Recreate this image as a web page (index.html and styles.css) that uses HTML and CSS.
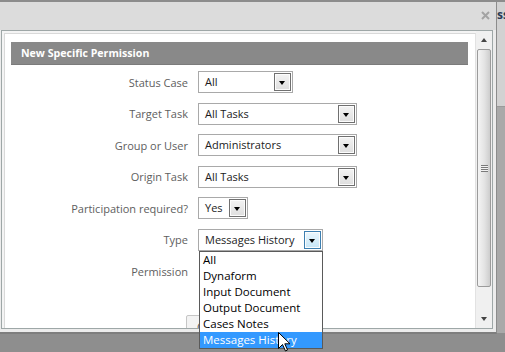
FILE: index.html
```html
<!DOCTYPE html>
<html lang="en">
<head>
  <meta charset="UTF-8" />
  <title>New Specific Permission</title>
  <link rel="stylesheet" href="styles.css">
</head>
<body>

  <div class="backdrop">
    <div class="backdrop-top"><span class="backdrop-text">ss</span></div>
  </div>

  <div class="dialog">
    <div class="dlg-head">
      <svg class="close" width="9" height="9" viewBox="0 0 9 9">
        <path d="M1 1 L8 8 M8 1 L1 8" stroke="#a3a3a3" stroke-width="2" />
      </svg>
    </div>
    <div class="dlg-body">
      <div class="frame">
        <div class="frame-main">
          <div class="inner-box">
            <div class="form-title">New Specific Permission</div>

            <div class="fields">
              <div class="row">
                <label>Status Case</label>
                <div class="select w-status">All<span class="arrow"></span></div>
              </div>
              <div class="row">
                <label>Target Task</label>
                <div class="select w-wide">All Tasks<span class="arrow"></span></div>
              </div>
              <div class="row">
                <label>Group or User</label>
                <div class="select w-wide">Administrators<span class="arrow"></span></div>
              </div>
              <div class="row">
                <label>Origin Task</label>
                <div class="select w-wide">All Tasks<span class="arrow"></span></div>
              </div>
              <div class="row">
                <label>Participation required?</label>
                <div class="select w-yes">Yes<span class="arrow"></span></div>
              </div>
              <div class="row">
                <label>Type</label>
                <div class="select w-type">Messages History<span class="arrow focus"></span></div>
              </div>
              <div class="row">
                <label>Permission</label>
              </div>
            </div>

            <div class="actions">
              <button class="btn">C</button>
            </div>
          </div>
        </div>
        <div class="scrollbar">
          <div class="sb-btn"><span class="tri-up"></span></div>
          <div class="sb-thumb"><span class="grip"></span></div>
          <div class="sb-track"></div>
          <div class="sb-btn"><span class="tri-down"></span></div>
        </div>
      </div>
    </div>
  </div>

  <ul class="dropdown">
    <li>All</li>
    <li>Dynaform</li>
    <li>Input Document</li>
    <li>Output Document</li>
    <li>Cases Notes</li>
    <li class="selected">Messages History</li>
  </ul>

  <svg class="cursor" width="13" height="20" viewBox="0 0 13 20">
    <path d="M0.5 0.5 L0.5 16.5 L4.5 12.5 L7.5 19 L9.5 18 L6.8 11.8 L12 11.8 Z" fill="#fff" stroke="#000" stroke-width="1" stroke-linejoin="round" />
  </svg>

</body>
</html>
```

FILE: styles.css
```css
* {
  box-sizing: border-box;
  margin: 0;
  padding: 0;
}

body {
  position: relative;
  width: 505px;
  height: 352px;
  overflow: hidden;
  background: #8e8e8e;
  font-family: 'Open Sans', 'Noto Sans', sans-serif;
  font-size: 11px;
}

/* page behind the modal */
.backdrop {
  height: 333px;
  background: #a9a9a9;
  border-top: 2px solid #8c8c8c;
}

.backdrop-top {
  height: 105px;
  background: #d2d2d2;
  border-bottom: 1px solid #9a9a9a;
  padding: 4px 0 0 497px;
}

.backdrop-text {
  color: #2b3a55;
  font-weight: 700;
  font-size: 12px;
}

/* dialog */
.dialog {
  position: absolute;
  left: -4px;
  top: 0;
  width: 501px;
  height: 334px;
  display: flex;
  flex-direction: column;
  background: #ececec;
  border-top: 2px solid #8c8c8c;
  border-bottom: 2px solid #7e7e7e;
  border-right: 1px solid #8c8c8c;
}

.dlg-head {
  flex-shrink: 0;
  height: 28px;
  background: #dcdcdc;
  display: flex;
  justify-content: flex-end;
  align-items: center;
  padding: 0 6px 2px 0;
}

.dlg-body {
  flex: 1;
  min-height: 0;
  display: flex;
  padding: 0 3px 3px 5px;
}

.frame {
  flex: 1;
  min-height: 0;
  display: flex;
  overflow: hidden;
  background: #f4f4f4;
  border: 1px solid #9ea7a7;
}

.frame-main {
  flex: 1;
  min-height: 0;
  display: flex;
  padding: 2px 0 0 2px;
}

.inner-box {
  flex: 1;
  overflow: hidden;
  background: #fff;
  border-top: 1px solid #d9d9d9;
  border-left: 1px solid #d9d9d9;
  border-right: 1px solid #e2e2e2;
  padding: 8px 7px 0 6px;
}

.form-title {
  height: 23px;
  line-height: 22px;
  padding-left: 10px;
  background: #898989;
  border-bottom: 1px solid #7b7b7b;
  color: #fff;
  font-weight: 700;
  font-size: 10.6px;
}

.fields {
  display: flex;
  flex-direction: column;
  gap: 9.6px;
  padding-top: 6px;
}

.row {
  display: flex;
  align-items: center;
  height: 22px;
}

.row label {
  width: 177px;
  margin-right: 10px;
  text-align: right;
  color: #5e5e5e;
}

.select {
  position: relative;
  height: 22px;
  line-height: 20px;
  padding-left: 6px;
  border: 1px solid #a9a9a9;
  background: #fff;
  color: #1c1c1c;
}

.w-status { width: 95px; }
.w-wide { width: 159px; }
.w-yes { width: 50px; }
.w-type { width: 125px; }

.arrow {
  position: absolute;
  right: 1px;
  top: 1px;
  width: 17px;
  height: 18px;
  border: 1px solid #707070;
  background: linear-gradient(#f3f3f3, #dedede);
  box-shadow: inset 0 0 0 1px #fcfcfc;
}

.arrow::after {
  content: "";
  position: absolute;
  left: 4px;
  top: 7px;
  border-left: 3.5px solid transparent;
  border-right: 3.5px solid transparent;
  border-top: 4px solid #000;
}

.arrow.focus {
  border-color: #3c7fb1;
  background: linear-gradient(#eaf6fd, #c6e6f7);
}

.actions {
  padding: 32px 0 0 175px;
}

.btn {
  height: 24px;
  width: 60px;
  padding-left: 10px;
  text-align: left;
  border: 1px solid #c6c6c6;
  border-radius: 2px;
  background: #f3f3f3;
  color: #555;
  font-family: inherit;
  font-size: 11px;
}

/* scrollbar */
.scrollbar {
  width: 16px;
  display: flex;
  flex-direction: column;
  background: #f0f0f0;
}

.sb-btn {
  flex-shrink: 0;
  height: 18px;
  display: flex;
  align-items: center;
  justify-content: center;
}

.tri-up {
  border-left: 3.5px solid transparent;
  border-right: 3.5px solid transparent;
  border-bottom: 4px solid #444;
}

.tri-down {
  border-left: 3.5px solid transparent;
  border-right: 3.5px solid transparent;
  border-top: 4px solid #444;
}

.sb-thumb {
  flex-shrink: 0;
  height: 238px;
  margin: 0 1px;
  display: flex;
  align-items: center;
  justify-content: center;
  border: 1px solid #9b9b9b;
  border-radius: 2px;
  background: linear-gradient(to right, #f4f4f4, #e3e3e3 55%, #cdcdcd);
}

.grip {
  width: 7px;
  height: 7px;
  background: repeating-linear-gradient(#7a7a7a 0 1px, #f2f2f2 1px 2px);
}

.sb-track {
  flex: 1;
}

/* open select list */
.dropdown {
  position: absolute;
  left: 199px;
  top: 251px;
  width: 124px;
  list-style: none;
  background: #fff;
  border: 1px solid #5a5a5a;
  color: #000;
  font-size: 11.5px;
}

.dropdown li {
  height: 16px;
  line-height: 16px;
  padding-left: 3px;
}

.dropdown li.selected {
  background: #3399ff;
  color: #fff;
}

.cursor {
  position: absolute;
  left: 278px;
  top: 332px;
}
```
